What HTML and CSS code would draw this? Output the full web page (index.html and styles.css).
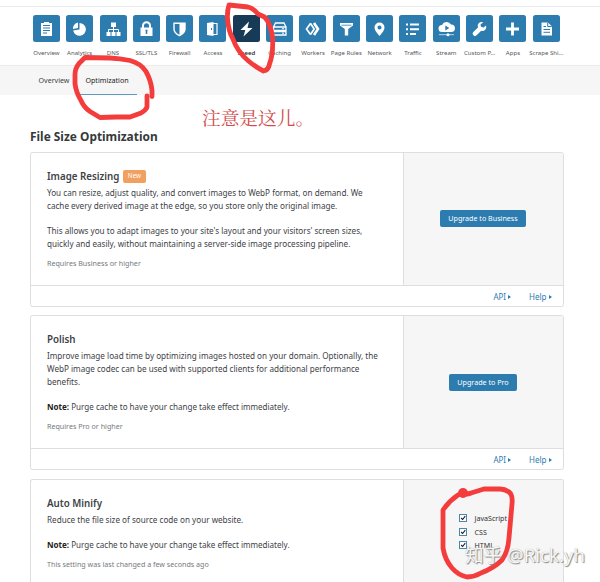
FILE: index.html
```html
<!DOCTYPE html>
<html lang="en">
<head>
<meta charset="utf-8">
<title>Speed</title>
<link rel="stylesheet" href="styles.css">
</head>
<body>
<nav class="apps">
  <a class="app"><span class="tile"><svg viewBox="0 0 27 27"><path fill="#fff" d="M8 8h3V7h5v1h3v13H8z"/><path stroke="#2c7cb0" d="M10 10.5h7M10 13h7M10 15.5h7M10 18h4"/></svg></span><span class="label">Overview</span></a>
  <a class="app"><span class="tile"><svg viewBox="0 0 27 27"><path fill="#fff" d="M13.500 8a6.400 6.400 0 1 1-6.300 7.500L13.500 14.500zM12 7.500v5.500l-5 1a6 6 0 0 1 5-6.500z"/></svg></span><span class="label">Analytics</span></a>
  <a class="app"><span class="tile"><svg viewBox="0 0 27 27"><path fill="#fff" d="M11 7.500h5v4.500h-5zM6.500 17h4v4h-4zM11.500 17h4v4h-4zM16.500 17h4v4h-4z"/><path fill="none" stroke="#fff" d="M13.500 12v5M8.500 17v-2.500h10V17"/></svg></span><span class="label">DNS</span></a>
  <a class="app"><span class="tile"><svg viewBox="0 0 27 27"><path fill="#fff" d="M7.500 12.500h12V21h-12z"/><path fill="none" stroke="#fff" stroke-width="2" d="M10 13v-2.500a3.500 3.200 0 0 1 7 0V13"/><path stroke="#2c7cb0" stroke-width="1.500" d="M13.500 15v4M12.500 15.500h2"/></svg></span><span class="label">SSL/TLS</span></a>
  <a class="app"><span class="tile"><svg viewBox="0 0 27 27"><path fill="none" stroke="#fff" stroke-width="1.400" d="M8 8.200h11V14q0 4-5.500 6.600Q8 18 8 14z"/><path fill="#fff" d="M13.500 8.200H19V14q0 4-5.500 6.600z"/></svg></span><span class="label">Firewall</span></a>
  <a class="app"><span class="tile"><svg viewBox="0 0 27 27"><path fill="#fff" d="M8 8l6.500-1v14L8 20z"/><path fill="none" stroke="#fff" stroke-width="1.200" d="M14 8.500h4v11h-4"/><path stroke="#2c7cb0" d="M12.500 13v2"/></svg></span><span class="label">Access</span></a>
  <a class="app current"><span class="tile"><svg viewBox="0 0 27 27"><path fill="#fff" d="M16 6.500L7.500 15h4.800l-1.800 6.500L19.500 13h-5z"/></svg></span><span class="label">Speed</span></a>
  <a class="app"><span class="tile"><svg viewBox="0 0 27 27"><path fill="none" stroke="#fff" stroke-width="1.300" d="M7.500 12l2-4h8.500l2 4M7.500 12h12.500v3.500H7.500zM7.500 16.500h12.500V20H7.500z"/><path stroke="#fff" d="M16 13.700h2M16 18.200h2"/></svg></span><span class="label">Caching</span></a>
  <a class="app"><span class="tile"><svg viewBox="0 0 27 27"><path fill="none" stroke="#fff" stroke-width="1.700" d="M11.500 8.500L7.500 14l4 5.500M11.500 8.500l3.700 5.500-3.700 5.500"/><path fill="none" stroke="#fff" stroke-width="2.600" d="M15 8l4 6-4 6"/></svg></span><span class="label">Workers</span></a>
  <a class="app"><span class="tile"><svg viewBox="0 0 27 27"><path fill="#fff" d="M7 8h13v2.500L15.200 14v6.500h-3.400V14L7 10.500z"/><path stroke="#2c7cb0" stroke-width=".8" d="M8.500 10.200h10"/></svg></span><span class="label">Page Rules</span></a>
  <a class="app"><span class="tile"><svg viewBox="0 0 27 27"><path fill="#fff" fill-rule="evenodd" d="M13.500 7.500a5 5 0 0 1 5 5q0 3-5 8.500-5-5.500-5-8.500a5 5 0 0 1 5-5zm0 3a2 2 0 1 0 0 4 2 2 0 0 0 0-4z"/></svg></span><span class="label">Network</span></a>
  <a class="app"><span class="tile"><svg viewBox="0 0 27 27"><path stroke="#fff" stroke-width="2" d="M7 9.500h2M7 14.200h2M7 19h2M11 9.500h9M11 14.200h9M11 19h6"/></svg></span><span class="label">Traffic</span></a>
  <a class="app"><span class="tile"><svg viewBox="0 0 27 27"><path fill="#fff" d="M9 17a3.500 3.500 0 0 1 0-7 5 5 0 0 1 9-.5A3.800 3.800 0 0 1 19 17z"/><path fill="#2c7cb0" d="M12.300 10.500v5l4-2.500z"/><path stroke="#fff" stroke-width=".7" d="M6 19.700h15"/><circle cx="15" cy="19.700" r="1.500" fill="#fff"/></svg></span><span class="label">Stream</span></a>
  <a class="app"><span class="tile"><svg viewBox="0 0 27 27"><path fill="#fff" d="M20 10.500l-2.500 2-2.500-.8-.5-2.300 2.800-2.100a4 4 0 0 0-5.300 5.200L7.300 17a2.300 2.300 0 0 0 3.300 3.300l4.600-4.500a4 4 0 0 0 4.800-5.300z"/></svg></span><span class="label">Custom P...</span></a>
  <a class="app"><span class="tile"><svg viewBox="0 0 27 27"><path stroke="#fff" stroke-width="2.800" d="M13.500 7.500v13M7 14h13"/></svg></span><span class="label">Apps</span></a>
  <a class="app"><span class="tile"><svg viewBox="0 0 27 27"><path fill="#fff" d="M8.500 7.500h6.500l4 4V20.500h-10.500z"/><path fill="none" stroke="#2c7cb0" d="M14.700 7.500v4h4M10.500 11.500h2.500M10.500 14.500h6.500M10.500 17.300h6.500"/></svg></span><span class="label">Scrape Shi...</span></a>
</nav>
<div class="tabs"><a class="tab">Overview</a><a class="tab active">Optimization</a></div>
<main>
  <h1>File Size Optimization</h1>
  <section class="card">
    <div class="body">
      <div class="info">
        <h2>Image Resizing<span class="badge">New</span></h2>
        <p>You can resize, adjust quality, and convert images to WebP format, on demand. We<br>cache every derived image at the edge, so you store only the original image.</p>
        <p>This allows you to adapt images to your site's layout and your visitors' screen sizes,<br>quickly and easily, without maintaining a server-side image processing pipeline.</p>
        <small>Requires Business or higher</small>
      </div>
      <div class="side"><a class="button">Upgrade to Business</a></div>
    </div>
    <footer><a>API</a><a>Help</a></footer>
  </section>
  <section class="card">
    <div class="body">
      <div class="info">
        <h2>Polish</h2>
        <p>Improve image load time by optimizing images hosted on your domain. Optionally, the<br>WebP image codec can be used with supported clients for additional performance<br>benefits.</p>
        <p class="note"><b>Note:</b> Purge cache to have your change take effect immediately.</p>
        <small>Requires Pro or higher</small>
      </div>
      <div class="side"><a class="button">Upgrade to Pro</a></div>
    </div>
    <footer><a>API</a><a>Help</a></footer>
  </section>
  <section class="card last">
    <div class="body">
      <div class="info">
        <h2>Auto Minify</h2>
        <p>Reduce the file size of source code on your website.</p>
        <p class="note"><b>Note:</b> Purge cache to have your change take effect immediately.</p>
        <small>This setting was last changed a few seconds ago</small>
      </div>
      <div class="side">
        <div class="options">
          <div class="option"><svg class="check" viewBox="0 0 8 8"><path d="M1.500 4l2 2 3.500-4.500"/></svg>JavaScript</div>
          <div class="option"><svg class="check" viewBox="0 0 8 8"><path d="M1.500 4l2 2 3.500-4.500"/></svg>CSS</div>
          <div class="option"><svg class="check" viewBox="0 0 8 8"><path d="M1.500 4l2 2 3.500-4.500"/></svg>HTML</div>
        </div>
      </div>
    </div>
  </section>
</main>
<div class="remark" lang="zh">注意是这儿。</div>
<svg class="marks" viewBox="0 0 600 582">
  <path d="M152 96.500v-6q-1-10-6-19-5-8-16-11-10-2-20-2.500l-25-.5-6 6q-4 5-4 11v9q1 9 6 17 3 7 9 11l10 6 16-.5h14l11-4q5-3 6-6V96"/>
  <path d="M258 14q-5-6-10-7l-19-2q-2 6-1.500 14 1 12 5 19 5 14 16 23 7 6 15 10 5-1 6-7 4-10 3-27-2-14-8-20z"/>
  <path d="M466 494q-5-1-8 1-9 6-15 15v38q2 12 9 20 6 7 15 9 7 0 14-4 13-5 21-13 6-8 7-22l3-34q1-9-3-12-4-3-9-3h-16l-13 4q-2 1-5 1"/>
  <circle class="blob" cx="463" cy="493" r="5"/>
</svg>
<div class="watermark">知乎 @Rick.yh</div>
</body>
</html>
```
FILE: styles.css
```css
* { box-sizing: border-box; }
body {
  margin: 0;
  height: 582px;
  overflow: hidden;
  position: relative;
  background: #fff;
  color: #404247;
  font-family: "Noto Sans", "Noto Sans CJK SC", sans-serif;
  font-size: 8.150px;
}
.apps {
  display: flex;
  height: 60px;
  margin-top: 6px;
  padding: 8.400px 0 0 29.700px;
  border-top: 1px solid #ececec;
  border-bottom: 1px solid #ebebeb;
}
.app { width: 33.330px; display: flex; flex-direction: column; align-items: center; flex: none; }
.tile { width: 27px; height: 27px; border-radius: 2.500px; background: #2c7cb0; }
.tile svg { display: block; width: 27px; height: 27px; }
.current .tile { background: #173b56; }
.label { margin-top: 6.500px; font-size: 6.050px; line-height: 9px; white-space: nowrap; color: #55575b; }
.current .label { color: #111; font-weight: 500; }
.tabs { display: flex; height: 28.500px; padding-left: 30.500px; background: #f6f6f6; font-size: 7.100px; line-height: 28px; }
.tab { padding: 0 8px; }
.active { color: #222; border-bottom: 1px solid #5b9bc0; }
main { height: 487px; overflow: hidden; padding: 32.500px 36.500px 0 30px; }
h1 { margin: 0 0 7px; font-size: 11.900px; line-height: 18px; font-weight: 700; color: #36393a; }
.card { height: 154.500px; margin-bottom: 8.800px; border: 1px solid #dedede; border-radius: 2.500px; overflow: hidden; background: #fff; }
.last { height: 110px; margin: 0; border-bottom: 0; }
.body { display: flex; height: 132.500px; border-bottom: 1px solid #dedede; }
.info { flex: 1; padding: 17px 0 0 16px; }
h2 { display: flex; align-items: center; margin: 0 0 4px; height: 13px; font-size: 9.750px; font-weight: 600; }
.badge { margin-left: 3.500px; padding: 0 5px; height: 12.500px; line-height: 12.500px; border-radius: 2px; background: #f1a05f; color: #fff; font-size: 6.300px; font-weight: 400; }
p { margin: 0 0 12.800px; line-height: 12.700px; white-space: nowrap; }
.note { font-size: 8.050px; }
small { display: block; margin-top: -6.500px; font-size: 7.150px; line-height: 13px; color: #77797d; }
b { color: #222; }
.side { width: 160px; display: flex; align-items: center; justify-content: center; border-left: 1px solid #dedede; background: #f6f6f6; }
.button { height: 17px; padding: 0 8.500px; border-radius: 2px; background: #2c7cb0; color: #fff; font-size: 7.150px; line-height: 17px; }
footer { display: flex; justify-content: flex-end; gap: 18px; padding-right: 11px; line-height: 22px; font-size: 8px; color: #2c7cb0; }
footer a { display: flex; align-items: center; gap: 2px; }
footer a::after { content: ""; border-left: 3px solid #2c7cb0; border-top: 2.500px solid transparent; border-bottom: 2.500px solid transparent; }
.options { margin: -27px 0 0 0; width: 49px; }
.option { display: flex; align-items: center; height: 13.600px; gap: 8px; font-size: 7.100px; color: #333; }
.check { width: 8px; height: 8px; flex: none; border: .8px solid #4a87aa; background: #fff; overflow: visible; }
.check path { fill: none; stroke: #222; stroke-width: 1.500; }
.remark { position: absolute; left: 202px; top: 104px; color: #d14b4b; font: 400 18.700px/26px "Noto Serif CJK SC", "Noto Sans CJK SC", serif; }
.marks { position: absolute; inset: 0; width: 600px; height: 582px; fill: none; stroke: #f43c3c; stroke-width: 4.800; stroke-linecap: round; stroke-linejoin: round; }
.blob { fill: #f43c3c; stroke: none; }
.watermark { position: absolute; left: 465px; top: 542px; color: #f7f7f7; font-size: 18.600px; line-height: 26px; white-space: nowrap; text-shadow: 1px 1px 1px #888, 0 0 1px #aaa; }
```
